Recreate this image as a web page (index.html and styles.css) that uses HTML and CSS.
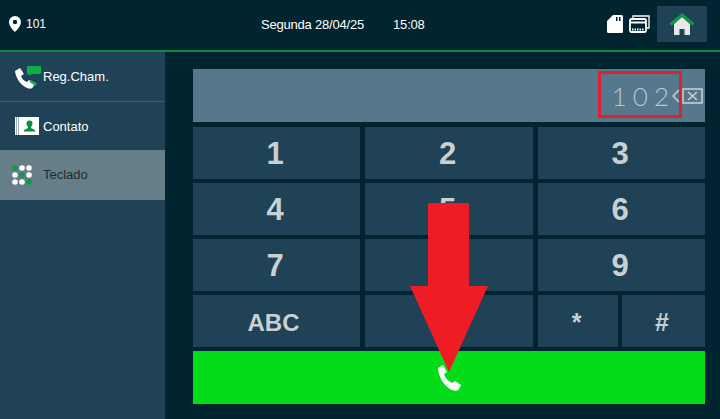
FILE: index.html
```html
<!DOCTYPE html>
<html lang="pt">
<head>
<meta charset="UTF-8">
<title>Teclado</title>
<link rel="stylesheet" href="styles.css">
</head>
<body>
<div class="screen">
    <div class="topbar">
        <div class="room">
            <svg class="pin" width="12" height="16" viewBox="0 0 12 16"><path fill="#fff" fill-rule="evenodd" d="M6 0a6 6 0 0 1 6 6c0 3.600-3.500 7.500-6 10C3.500 13.500 0 9.600 0 6a6 6 0 0 1 6-6zm0 3.800a2.200 2.200 0 1 0 0 4.400 2.200 2.200 0 0 0 0-4.400z"/></svg>
            <span>101</span>
        </div>
        <div class="clock"><span>Segunda 28/04/25</span><span>15:08</span></div>
        <div class="tools">
            <svg width="16" height="18" viewBox="0 0 16 18"><path fill="#fff" fill-rule="evenodd" d="M6 0h8.500q1.500 0 1.500 1.500v15q0 1.500-1.500 1.500h-13Q0 18 0 16.500V6zM9 2v4h1.500V2zm3 0v4h1.500V2z"/></svg>
            <svg width="21" height="18" viewBox="0 0 21 18"><g fill="none" stroke="#fff"><path stroke-width="1.300" d="M4 3V1h16v12h-2"/></g><rect x="1" y="4" width="16" height="13" rx="1.500" fill="none" stroke="#fff" stroke-width="1.800"/><path stroke="#fff" stroke-width="2" d="M1 7.500h16"/><path stroke="#fff" stroke-width="2" stroke-dasharray="1.500 1" d="M3 14.500h12"/></svg>
            <div class="home">
                <svg width="26" height="22" viewBox="0 0 26 22"><path fill="#e8e8e8" d="M5 11l8-7 8 7v11h-5.500v-6h-5v6H5z"/><path fill="none" stroke="#0d9a45" stroke-width="3" d="M1.500 11.500L13 2l11.500 9.500"/></svg>
            </div>
        </div>
    </div>
    <div class="main">
        <div class="side">
            <div class="side-item">
                <svg class="side-icon" width="26" height="24" viewBox="0 0 26 24"><path fill="#0fae4a" d="M12 1h14v8h-9l-3 2V9h-2z"/><path fill="#fff" d="M0 6l5-3 4 6-3 2c1 3 3 5 6 6l2-2 6 4-2 3c-1 2-3 2-6 1C6 20 1 14 0 6z"/><path fill="#0fae4a" d="M16 15l6 3.500-1.500 2.500-6-4z"/></svg>
                <span>Reg.Cham.</span>
            </div>
            <div class="side-item">
                <svg class="side-icon" width="24" height="18" viewBox="0 0 24 18"><rect width="24" height="18" fill="#fff"/><rect x="1" width="1" height="18" fill="#9fb0b8"/><rect x="3" width="1" height="18" fill="#9fb0b8"/><rect x="6" y="1" width="17" height="16" fill="#fff"/><path fill="#0b8f42" d="M14.500 3.500a3 3 0 0 1 3 3c0 1.500-.8 2.800-1.500 3.500v1l4 2v1.500H9V13l4-2v-1c-.7-.7-1.500-2-1.500-3.500a3 3 0 0 1 3-3z"/></svg>
                <span>Contato</span>
            </div>
            <div class="side-item active">
                <svg class="side-icon" width="20" height="20" viewBox="0 0 20 20">
                    <g fill="#fff">
                        <circle cx="10" cy="3" r="2.800"/><circle cx="17" cy="3" r="2.800"/>
                        <circle cx="3" cy="10" r="2.800"/><circle cx="17" cy="10" r="2.800"/>
                        <circle cx="3" cy="17" r="2.800"/><circle cx="10" cy="17" r="2.800"/>
                    </g>
                    <g fill="#0c9c46">
                        <circle cx="3" cy="3" r="2.800"/><circle cx="10" cy="10" r="2.800"/><circle cx="17" cy="17" r="2.800"/>
                    </g>
                </svg>
                <span>Teclado</span>
            </div>
        </div>
        <div class="content">
            <div class="display">
                <span class="number">1 0 2</span>
                <svg class="erase" width="32" height="16" viewBox="0 0 32 16"><path fill="none" stroke="#c9d2d6" stroke-width="1.500" d="M7 2L1 8l6 6"/><path fill="none" stroke="#c9d2d6" stroke-width="1.500" d="M11 1h19v14H11zM16 4l9 8M25 4l-9 8"/></svg>
                <div class="mark"></div>
            </div>
            <div class="keys">
                <div class="key">1</div>
                <div class="key">2</div>
                <div class="key">3</div>
                <div class="key">4</div>
                <div class="key">5</div>
                <div class="key">6</div>
                <div class="key">7</div>
                <div class="key">8</div>
                <div class="key">9</div>
                <div class="key abc">ABC</div>
                <div class="key">0</div>
                <div class="key split">
                    <div class="key">*</div>
                    <div class="key">#</div>
                </div>
            </div>
            <div class="call">
                <svg width="26" height="26" viewBox="0 0 26 26"><path fill="#fff" d="M1 3l5-3 4 7-3 2c1 4 4 7 8 9l3-2 6 4-2 4c-1 2-4 2-7 1C8 22 2 14 1 3z"/></svg>
            </div>
        </div>
    </div>
    <svg class="arrow" width="78" height="169" viewBox="0 0 78 169"><path fill="#ee1c25" d="M18 0h41v83h19L39 169 0 83h18z"/></svg>
</div>
</body>
</html>
```

FILE: styles.css
```css
* {
    box-sizing: border-box;
}

body {
    margin: 0;
    background: #012530;
    font-family: "Liberation Sans", Arial, sans-serif;
}

.screen {
    position: relative;
    width: 720px;
    height: 419px;
    overflow: hidden;
    display: flex;
    flex-direction: column;
}

/* barra superior */
.topbar {
    height: 52px;
    flex: none;
    display: flex;
    align-items: center;
    border-bottom: 2px solid #0c8a42;
    color: #fff;
    font-size: 12px;
    padding: 0 13px 2px 9px;
}

.room {
    display: flex;
    align-items: center;
    gap: 5px;
    width: 252px;
}

.clock {
    display: flex;
    gap: 29px;
    font-size: 13px;
    letter-spacing: -0.2px;
}

.tools {
    display: flex;
    align-items: center;
    margin-left: auto;
    gap: 6px;
}

.home {
    width: 50px;
    height: 36px;
    margin-left: 1px;
    background: #1f4256;
    display: flex;
    align-items: center;
    justify-content: center;
}

.main {
    flex: 1;
    display: flex;
}

/* menu lateral */
.side {
    width: 165px;
    flex: none;
    background: #1f4256;
}

.side-item {
    height: 50px;
    display: flex;
    align-items: center;
    padding-left: 15px;
    color: #fff;
    font-size: 13px;
    border-bottom: 1px solid #3a5d70;
    position: relative;
}

.side-item span {
    position: absolute;
    left: 43px;
    top: 17px;
}

.side-item:nth-child(2) {
    height: 48px;
    border-bottom: 0;
}

.side-item.active {
    background: #667e88;
    color: #1d2c33;
    border-bottom: 0;
    padding-left: 12px;
}

.content {
    flex: 1;
    padding: 17px 15px 15px 28px;
    display: flex;
    flex-direction: column;
}

.display {
    height: 53px;
    flex: none;
    background: #55788c;
    display: flex;
    align-items: center;
    justify-content: flex-end;
    padding-right: 1px;
    position: relative;
}

.number {
    font-size: 26px;
    color: #b9c6cd;
    font-family: Lato, sans-serif;
    font-weight: 300;
    white-space: pre;
    word-spacing: -1px;
    margin-right: 3px;
}

.mark {
    position: absolute;
    right: 23px;
    top: 2px;
    width: 84px;
    height: 47px;
    border: 3px solid #e0202e;
}

.keys {
    display: grid;
    grid-template-columns: 167px 168px 167px;
    grid-auto-rows: 52px;
    column-gap: 5px;
    row-gap: 4px;
    margin-top: 5px;
}

.key {
    background: #1f4256;
    color: #c9d0d4;
    font-size: 31px;
    font-weight: bold;
    display: flex;
    align-items: center;
    justify-content: center;
    padding: 2px 3px 0 0;
}

.abc {
    font-size: 24px;
    padding: 4px 6px 0 0;
}

.split {
    background: none;
    display: grid;
    grid-template-columns: 80px 83px;
    gap: 4px;
    align-items: stretch;
    padding: 0;
}

.split .key {
    font-size: 25px;
}

.call {
    height: 53px;
    margin-top: 4px;
    background: #04dc19;
    display: flex;
    align-items: center;
    justify-content: center;
    padding-left: 1px;
}

.arrow {
    position: absolute;
    left: 410px;
    top: 203px;
}
```
